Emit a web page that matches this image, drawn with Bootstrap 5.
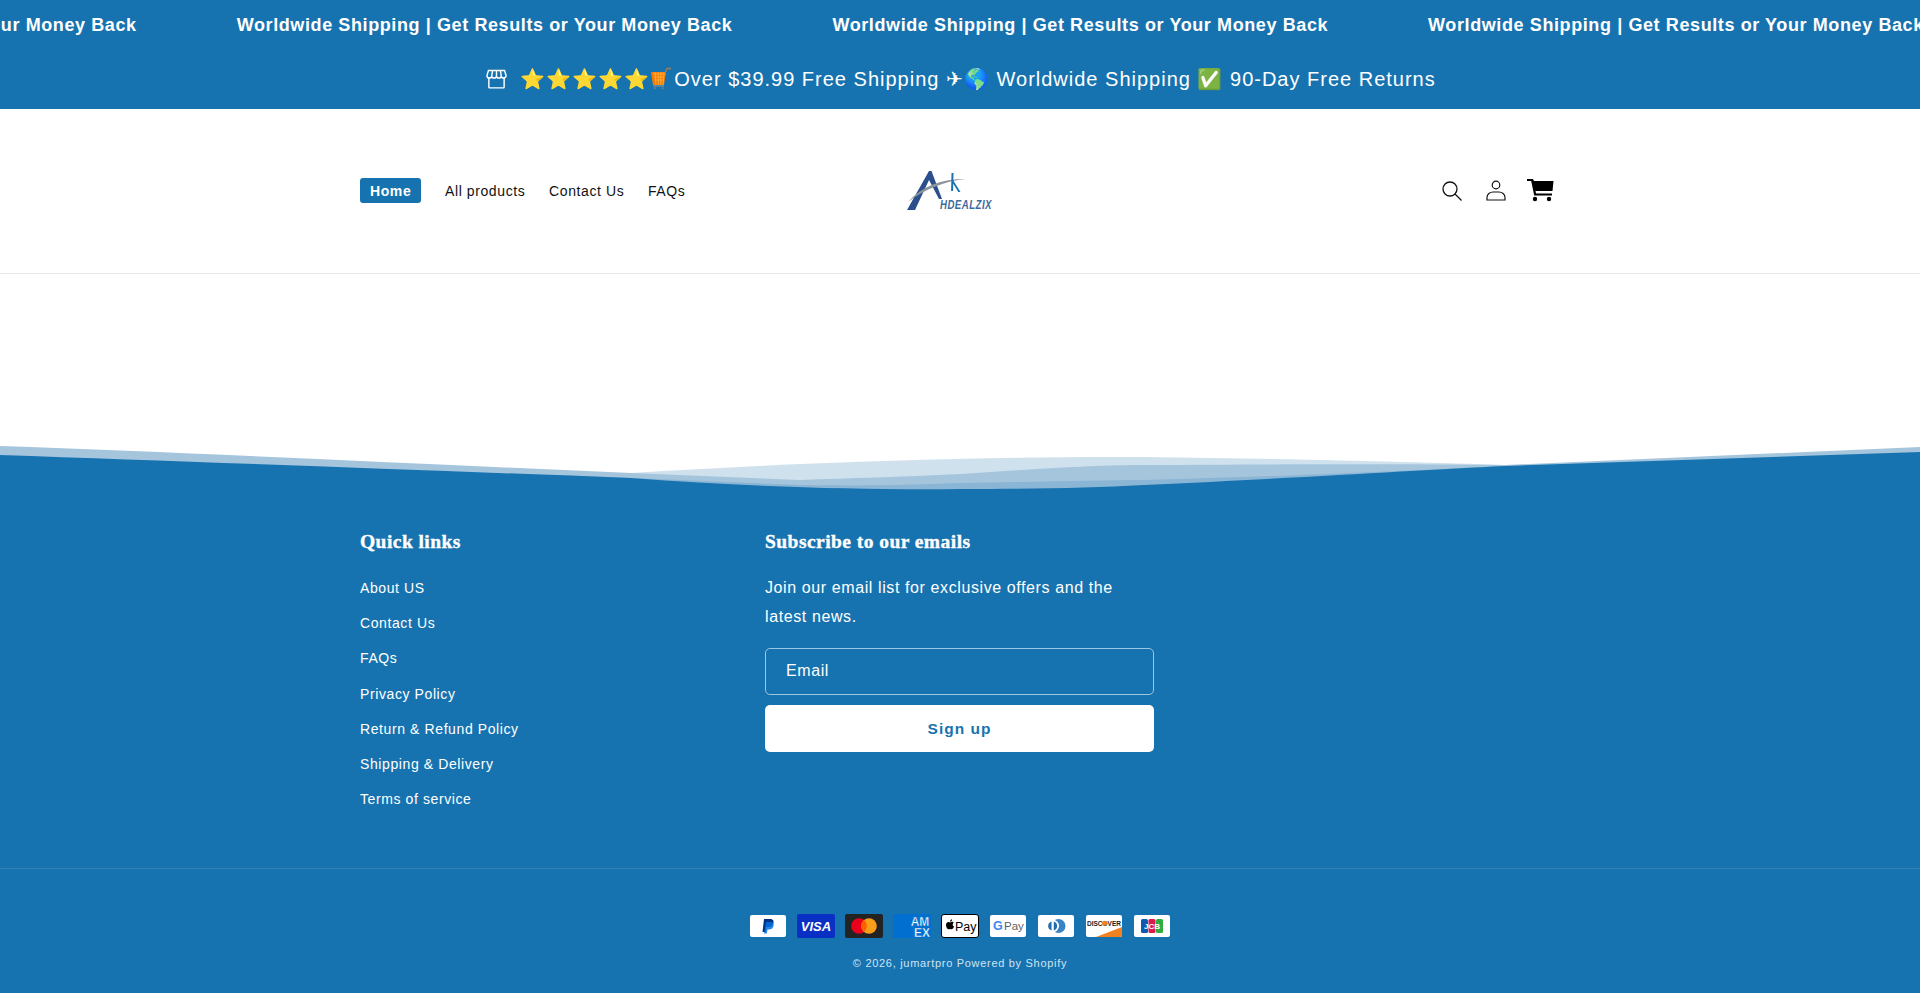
<!DOCTYPE html>
<html lang="en">
<head>
<meta charset="UTF-8">
<meta name="viewport" content="width=device-width, initial-scale=1.0">
<title>jumartpro</title>
<link href="https://cdn.jsdelivr.net/npm/bootstrap@5.3.0/dist/css/bootstrap.min.css" rel="stylesheet">
<style>
    body {
        font-family: "Liberation Sans", Arial, sans-serif;
        letter-spacing: .6px;
        background: #fff;
        color: #121212;
        overflow-x: hidden;
    }
    .brand-bg { background-color: #1773b0; color: #fff; }
    .ticker { height: 50px; overflow: hidden; font-size: 18px; font-weight: 700; }
    .ticker-track { width: 2600px; margin-left: -359px; gap: 100px; white-space: nowrap; line-height: 51px; }
    .ticker-track span { flex: 0 0 auto; }
    .promo { height: 59px; font-size: 20px; letter-spacing: 1px; gap: 13px; padding: 0 0 2px 2px; }
    .cart-emoji { vertical-align: -4px; margin-right: 1px; }
    .site-header { height: 165px; border-bottom: 1px solid #e8e8e8; padding-left: 360px; }
    .main-nav { width: 545px; font-size: 14px; gap: 23.7px; }
    .main-nav a { color: #121212; text-decoration: none; line-height: 25px; }
    .main-nav a.current { background: #1773b0; color: #fff; font-weight: 700; border-radius: 3px; padding: 0 10px; height: 25px; line-height: 27px; margin-bottom: 2px; }
    .logo-svg { display: block; }
    .head-icons { margin-left: 447px; gap: 24px; margin-top: -1px; }
    .cart-svg { margin-left: -3px; }
    .page-space { height: 166px; }
    .wave { display: block; width: 100%; height: 60px; }
    .foot-top { padding: 30px 0 0 360px; height: 369px; border-bottom: 1px solid #2f82b8; }
    .foot-links { width: 405px; }
    .foot-title { font-family: "Liberation Serif", serif; font-weight: 700; font-size: 19.5px; letter-spacing: .45px; -webkit-text-stroke: .35px #fff; line-height: 24px; margin-bottom: 0; }
    .foot-list { margin-top: 17px; font-size: 14px; }
    .foot-list li { height: 35.2px; line-height: 35px; }
    .foot-list a { color: #fff; text-decoration: none; }
    .foot-sub { width: 389px; }
    .foot-sub p { font-size: 16px; line-height: 29px; margin: 19px 0 17px; }
    .mail-field { height: 47px; border: 1px solid #9cc6e2; border-radius: 5px; padding: 0 20px; font-size: 16px; line-height: 44px; margin-bottom: 10px; }
    .sign-btn { height: 47px; width: 100%; background: #fff; color: #1773b0; font-weight: 700; font-size: 15.5px; letter-spacing: 1px; border: 0; border-radius: 5px; }
    .pay-row { gap: 10px; padding-top: 45px; }
    .pay-row svg { display: block; }
    .copy-line { font-size: 11px; letter-spacing: .7px; color: #cfe4f3; margin-top: 16px; padding-bottom: 21px; text-align: center; line-height: 18px; }
    .pay-text { font-family: "Liberation Sans", sans-serif; letter-spacing: 0; }
</style>
</head>
<body>
<div class="brand-bg ticker">
    <div class="d-flex ticker-track">
        <span>Worldwide Shipping | Get Results or Your Money Back</span>
        <span>Worldwide Shipping | Get Results or Your Money Back</span>
        <span>Worldwide Shipping | Get Results or Your Money Back</span>
        <span>Worldwide Shipping | Get Results or Your Money Back</span>
    </div>
</div>
<div class="brand-bg promo d-flex align-items-center justify-content-center">
    <svg width="21" height="20" viewBox="0 0 22 20" fill="none" stroke="#fff" stroke-width="1.500">
        <path d="M3 8v10.500a.8.8 0 0 0 .8.8h14.400a.8.8 0 0 0 .8-.8V8"/>
        <path d="M1 6.500 2.600 1h16.800L21 6.500a2.500 2.500 0 0 1-5 0 2.500 2.500 0 0 1-5 0 2.500 2.500 0 0 1-5 0 2.500 2.500 0 0 1-5 0zM6 6.500 7 1M11 6.500V1M16 6.500 15 1"/>
    </svg>
    <span>⭐⭐⭐⭐⭐<svg class="cart-emoji" width="23" height="23" viewBox="0 0 23 23"><path d="M1 5h15l-2 13H3z" fill="#f57c00"/><path d="M3 7h12M4 10h10M4.500 13h9M5 5l1 13M8 5l.5 13M11 5l-.3 13M14 5l-1 13" stroke="#ffb74d" stroke-width=".7"/><path d="M15 6 17 1.500h4" fill="none" stroke="#9e7b5a" stroke-width="1.300"/><path d="M3 19h11" stroke="#78909c" stroke-width="1.300"/><circle cx="5" cy="21.300" r="1.200" fill="#607d8b"/><circle cx="12.500" cy="21.300" r="1.200" fill="#607d8b"/></svg>Over $39.99 Free Shipping ✈🌎 Worldwide Shipping ✅ 90-Day Free Returns</span>
</div>

<header class="site-header d-flex align-items-center">
    <nav class="main-nav d-flex align-items-center">
        <a class="current" href="#">Home</a>
        <a href="#">All products</a>
        <a href="#">Contact Us</a>
        <a href="#">FAQs</a>
    </nav>
    <a href="#" aria-label="Home">
        <svg class="logo-svg" width="90" height="40" viewBox="0 0 90 40">
            <path d="M24 0h2.500L37 28h-3L24 9 10 39H2z" fill="#2a4f8c"/>
            <path d="M3 31C17 15 36 8 61 8 40 10 20 18 3 31z" fill="#8d949c"/>
            <path d="M46.500 2h2l-.4 18h-2zM48 9l7.500 12h-2.200l-6-10z" fill="#1773b0"/>
            <text x="35" y="38" font-size="12" font-style="italic" font-weight="700" textLength="52" lengthAdjust="spacingAndGlyphs" fill="#3c6a9e" font-family="Liberation Sans, sans-serif">HDEALZIX</text>
        </svg>
    </a>
    <div class="head-icons d-flex align-items-center">
        <svg width="20" height="20" viewBox="0 0 20 20" fill="none" stroke="#121212" stroke-width="1.300"><circle cx="8" cy="8" r="7"/><path d="m13 13 6.500 6.500"/></svg>
        <svg width="20" height="21" viewBox="0 0 20 21" fill="none" stroke="#121212" stroke-width="1.200"><circle cx="10" cy="5" r="3.800"/><path d="M1 20v-2.500C1 14 4 12 7 12h6c3 0 6 2 6 5.500V20z"/></svg>
        <svg class="cart-svg" width="27" height="23" viewBox="0 0 27 23"><path d="M0 0h6l1 2h19.500l-1 10H8.500l.5 2.500h16v2H7.200L4.200 2H0z" fill="#000"/><circle cx="8" cy="20" r="2.200"/><circle cx="22" cy="20" r="2.200"/></svg>
    </div>
</header>

<div class="page-space"></div>

<svg class="wave" viewBox="0 440 1920 60" preserveAspectRatio="none">
    <path d="M631 473C800 462 1000 456 1144 457 1300 459 1420 462 1505 465L1505 490H631z" fill="#d0e1ee"/>
    <path d="M0 446C200 453 420 464 631 473L800 480C850 478 900 477 960 474 1050 468 1100 465 1144 465 1300 464 1420 464 1505 465L1920 447V500H0z" fill="#a5c5dd"/>
    <path d="M560 475 800 485C880 486 900 485 960 483 1040 482 1100 480 1144 480 1300 476 1420 470 1505 466V500H560z" fill="#8ab5d5"/>
    <path d="M0 455C200 462 420 470 631 478 750 487 860 490 960 489 1040 489 1090 488 1144 485 1300 478 1420 470 1505 466L1920 452V500H0z" fill="#1773b0"/>
</svg>

<footer class="brand-bg">
    <div class="foot-top d-flex">
        <div class="foot-links">
            <h2 class="foot-title">Quick links</h2>
            <ul class="foot-list list-unstyled mb-0">
                <li><a href="#">About US</a></li>
                <li><a href="#">Contact Us</a></li>
                <li><a href="#">FAQs</a></li>
                <li><a href="#">Privacy Policy</a></li>
                <li><a href="#">Return &amp; Refund Policy</a></li>
                <li><a href="#">Shipping &amp; Delivery</a></li>
                <li><a href="#">Terms of service</a></li>
            </ul>
        </div>
        <div class="foot-sub">
            <h2 class="foot-title">Subscribe to our emails</h2>
            <p>Join our email list for exclusive offers and the latest news.</p>
            <div class="mail-field">Email</div>
            <button class="sign-btn" type="button">Sign up</button>
        </div>
    </div>
    <div class="pay-row d-flex justify-content-center">
        <svg width="38" height="24" viewBox="0 0 38 24"><rect x="1" y="1" width="36" height="22" rx="2" fill="#fff"/><path d="M15 5h6c3 0 4 2 3.500 4-.6 3-3 4-5 4h-2l-.8 5h-3.200z" fill="#003087"/><path d="M17 8h5.500c1.500.5 2.500 2 2 4-.6 2.600-2.500 3.500-4.500 3.500h-1.500l-.7 4h-2.800z" fill="#0070e0" opacity=".85"/></svg>
        <svg width="38" height="24" viewBox="0 0 38 24"><rect width="38" height="24" rx="2" fill="#0a2fc4"/><text class="pay-text" x="19" y="17" text-anchor="middle" font-size="13" font-weight="700" font-style="italic" fill="#fff">VISA</text></svg>
        <svg width="38" height="24" viewBox="0 0 38 24"><rect width="38" height="24" rx="2" fill="#232323"/><circle cx="14" cy="12" r="7.800" fill="#eb001b"/><circle cx="24" cy="12" r="7.800" fill="#f79e1b"/><path d="M19 6a7.800 7.800 0 0 1 0 12 7.800 7.800 0 0 1 0-12z" fill="#ff5f00"/></svg>
        <svg width="38" height="24" viewBox="0 0 38 24"><rect width="38" height="24" rx="2" fill="#006fcf"/><text class="pay-text" x="27" y="12" text-anchor="middle" font-size="12" font-weight="700" fill="#fff" stroke="#006fcf" stroke-width=".4">AM</text><text class="pay-text" x="29" y="22.500" text-anchor="middle" font-size="12" font-weight="700" fill="#fff" stroke="#006fcf" stroke-width=".4">EX</text></svg>
        <svg width="38" height="24" viewBox="0 0 38 24"><rect x=".5" y=".5" width="37" height="23" rx="2.500" fill="#fff" stroke="#000"/><path d="M9.200 8.200c.6 0 1.300-.5 1.600-.5.500 0 1.400.2 1.900 1-1.600 1-1.300 3.100.3 3.800-.4 1.200-1.300 2.800-2.200 2.800-.6 0-.9-.4-1.600-.4s-1.100.4-1.600.4c-1.200 0-2.600-2.300-2.600-4.300 0-1.900 1.300-2.900 2.400-2.900.7 0 1.300.4 1.800.4zM9.100 7.700c0-1.200.9-2.200 2-2.400.1 1.300-.9 2.400-2 2.400z" fill="#000"/><text class="pay-text" x="14" y="16.500" font-size="12.500" fill="#000">Pay</text></svg>
        <svg width="38" height="24" viewBox="0 0 38 24"><rect x="1" y="1" width="36" height="22" rx="2" fill="#fff"/><text class="pay-text" x="4" y="16" font-size="12.500" font-weight="700"><tspan fill="#4285f4">G</tspan></text><text class="pay-text" x="15" y="16" font-size="11.500" fill="#5f6368">Pay</text></svg>
        <svg width="38" height="24" viewBox="0 0 38 24"><rect x="1" y="1" width="36" height="22" rx="2" fill="#fff"/><circle cx="21.500" cy="12" r="7" fill="#3a84c5"/><circle cx="15.500" cy="12" r="6.500" fill="#fff"/><path d="M14.500 7.500v9a4.700 4.700 0 0 1 0-9zM16.800 7.500a4.700 4.700 0 0 1 0 9z" fill="#1f6cb0"/></svg>
        <svg width="38" height="24" viewBox="0 0 38 24"><rect x="1" y="1" width="36" height="22" rx="2" fill="#fff"/><path d="M11 23 37 13v8a2 2 0 0 1-2 2z" fill="#f48120"/><text class="pay-text" x="19" y="11.500" text-anchor="middle" font-size="6.800" font-weight="700" textLength="34" lengthAdjust="spacingAndGlyphs" fill="#222">DISCOVER</text><circle cx="19.500" cy="9.200" r="2.500" fill="#f48120"/></svg>
        <svg width="38" height="24" viewBox="0 0 38 24"><rect x="1" y="1" width="36" height="22" rx="2" fill="#fff"/><rect x="8" y="5" width="7" height="14" rx="1.500" fill="#0b5bb0"/><rect x="15.500" y="5" width="7" height="14" rx="1.500" fill="#d91a4a"/><rect x="23" y="5" width="7" height="14" rx="1.500" fill="#2fae3f"/><text class="pay-text" x="19" y="15" text-anchor="middle" font-size="8" font-weight="700" letter-spacing="2.200" fill="#fff">JCB</text></svg>
    </div>
    <div class="copy-line">© 2026, jumartpro Powered by Shopify</div>
</footer>
<script src="https://cdn.jsdelivr.net/npm/bootstrap@5.3.0/dist/js/bootstrap.bundle.min.js"></script>
</body>
</html>
